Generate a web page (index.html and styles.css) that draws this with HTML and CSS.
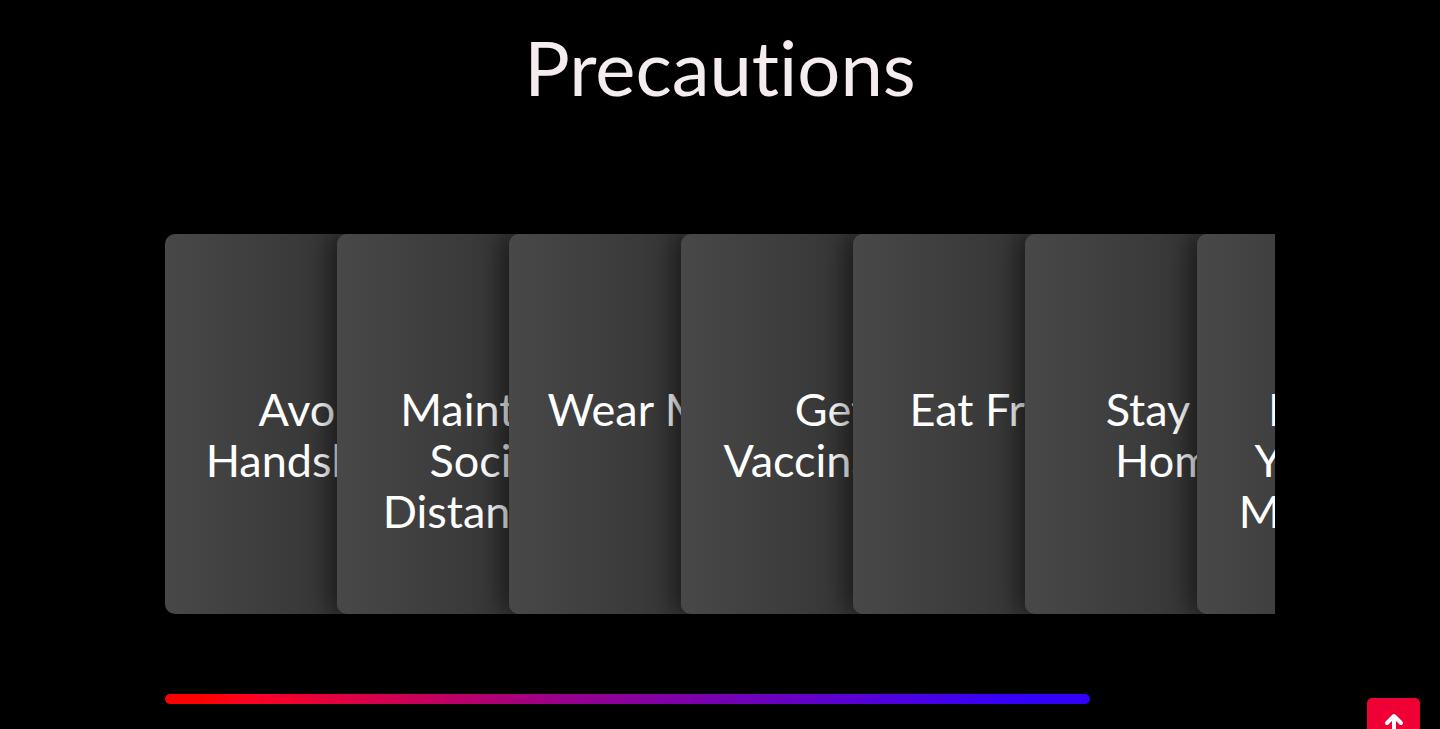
FILE: index.html
```html
<!DOCTYPE html>
<html lang="en">
<head>
<meta charset="utf-8">
<title>Precautions</title>
<link rel="stylesheet" href="styles.css">
</head>
<body>
<main class="container">
  <h1 class="title">Precautions</h1>
  <section class="cards" aria-label="Precautions list">
    <article class="card"><h2 class="card-title">Avoid Handshake</h2></article>
    <article class="card"><h2 class="card-title">Maintain Social Distancing</h2></article>
    <article class="card"><h2 class="card-title">Wear Mask</h2></article>
    <article class="card"><h2 class="card-title">Get Vaccinated</h2></article>
    <article class="card"><h2 class="card-title">Eat Fruits</h2></article>
    <article class="card"><h2 class="card-title">Stay At Home</h2></article>
    <article class="card"><h2 class="card-title">Practice Yoga And Meditation</h2></article>
  </section>
  <div class="bar"></div>
</main>
<button class="to-top" type="button" aria-label="Back to top">
  <svg class="to-top-icon" viewBox="0 0 20 22" aria-hidden="true"><path d="M10 20V4M3 10 10 3l7 7" fill="none" stroke="currentColor" stroke-width="4" stroke-linecap="round" stroke-linejoin="round"/></svg>
</button>
</body>
</html>
```

FILE: styles.css
```css
* { box-sizing: border-box; }
body {
  margin: 0;
  background: #000;
  color: #fff;
  font-family: Lato, "Open Sans", sans-serif;
  font-variant-ligatures: none;
  overflow: hidden;
}
.container {
  max-width: 1140px;
  margin: 0 auto;
  padding: 24px 15px 0;
}
.title {
  margin: 0;
  color: #f5ecee;
  font-size: 76px;
  font-weight: 400;
  line-height: 86px;
  text-align: center;
}
.cards {
  display: flex;
  margin-top: 124px;
  overflow: hidden;
}
.card {
  flex: 0 0 300px;
  min-height: 380px;
  padding: 150px 32px 32px;
  border-radius: 10px;
  background: linear-gradient(90deg, #484848, #282828);
}
.card + .card {
  margin-left: -128px;
  box-shadow: -8px 0 24px rgba(0, 0, 0, 0.5);
}
.card-title {
  margin: 0;
  font-size: 45px;
  font-weight: 400;
  line-height: 51px;
  text-align: center;
}
.bar {
  width: 83.3333%;
  height: 10px;
  margin-top: 80px;
  border-radius: 5px;
  background: linear-gradient(90deg, #f00 4%, #ff0022 9%, #98008c 43%, #30f 93%);
}
.to-top {
  position: fixed;
  right: 20px;
  bottom: -20px;
  display: flex;
  justify-content: center;
  width: 53px;
  height: 51px;
  padding: 15px 0;
  border: 0;
  border-radius: 5px;
  background: #ef0035;
  color: #fff;
}
.to-top-icon { width: 20px; height: 22px; }
```
